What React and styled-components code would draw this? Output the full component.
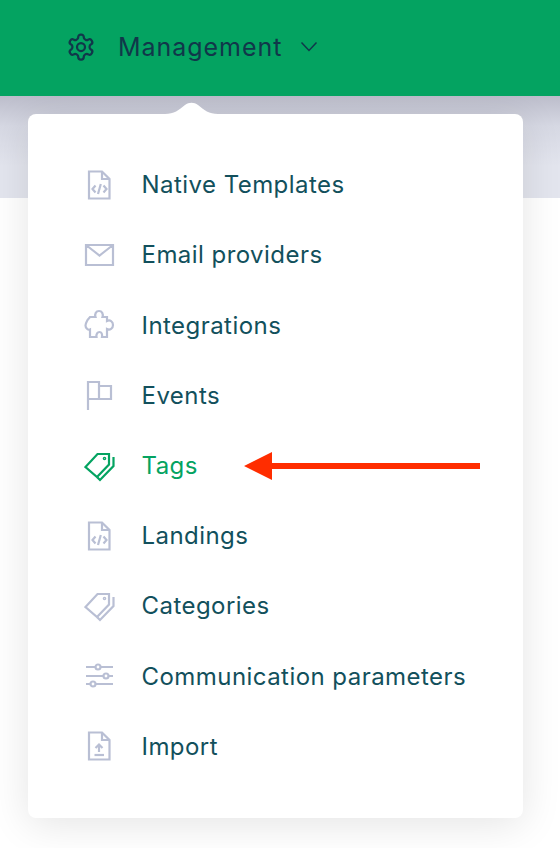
import React from 'react';
import styled, { createGlobalStyle } from 'styled-components';

const GlobalStyle = createGlobalStyle`
  html, body {
    margin: 0;
    padding: 0;
    background: #fff;
  }
  body {
    font-family: "Inter", "Noto Sans", sans-serif;
  }
`;

const Page = styled.div`
  position: relative;
  width: 560px;
  height: 848px;
  overflow: hidden;
  background: #fff;
`;

const TopBar = styled.header`
  position: relative;
  z-index: 5;
  height: 96px;
  box-sizing: border-box;
  padding: 0 0 3px 66px;
  display: flex;
  align-items: center;
  background: #04a361;
  color: #11374a;
`;

const TopLabel = styled.span`
  margin-left: 22px;
  margin-right: 18px;
  font-size: 25px;
  letter-spacing: 0.95px;
`;

const SubBar = styled.div`
  height: 102px;
  background: linear-gradient(#bcbdcb 0, #d6d8e3 30px, #e3e5ee 70px);
`;

const Menu = styled.nav`
  position: absolute;
  z-index: 4;
  left: 28px;
  top: 114px;
  width: 495px;
  height: 704px;
  box-sizing: border-box;
  padding-top: 35.7px;
  background: #fff;
  border-radius: 8px;
  box-shadow: 0 6px 40px rgba(0, 0, 0, 0.11);

  &::before {
    content: '';
    position: absolute;
    left: 137px;
    top: -15px;
    width: 53px;
    height: 15px;
    background: #fff;
    clip-path: path('M0 15 C9 15 14 11 20 6 C24 3 29 3 33 6 C39 11 44 15 53 15 Z');
  }
`;

const Row = styled.a`
  height: 70.2px;
  display: flex;
  align-items: center;
  font-size: 24px;
  letter-spacing: 0.45px;
  color: ${({ $active }) => ($active ? '#04a361' : '#12505c')};
`;

const IconSlot = styled.span`
  width: 113.5px;
  padding-left: 56px;
  box-sizing: border-box;
  display: flex;
  color: ${({ $active }) => ($active ? '#04a361' : '#b9bfd4')};
`;

const Arrow = styled.svg`
  position: absolute;
  z-index: 6;
  left: 244px;
  top: 451px;
`;

const Chevron = () => (
  <svg width="18" height="12" viewBox="0 0 18 12" fill="none" stroke="currentColor" strokeWidth="1.5">
    <path d="M1.5 1.5 L9 9.5 L16.5 1.5" />
  </svg>
);

const Gear = () => (
  <svg width="30" height="30" viewBox="0 0 24 24" fill="none" stroke="currentColor" strokeWidth="1.8" strokeLinejoin="round">
    <path d="M12.22 2h-.44a2 2 0 0 0-2 2v.18a2 2 0 0 1-1 1.73l-.43.25a2 2 0 0 1-2 0l-.15-.08a2 2 0 0 0-2.73.73l-.22.38a2 2 0 0 0 .73 2.73l.15.1a2 2 0 0 1 1 1.72v.51a2 2 0 0 1-1 1.74l-.15.09a2 2 0 0 0-.73 2.73l.22.38a2 2 0 0 0 2.73.73l.15-.08a2 2 0 0 1 2 0l.43.25a2 2 0 0 1 1 1.73V20a2 2 0 0 0 2 2h.44a2 2 0 0 0 2-2v-.18a2 2 0 0 1 1-1.73l.43-.25a2 2 0 0 1 2 0l.15.08a2 2 0 0 0 2.73-.73l.22-.39a2 2 0 0 0-.73-2.73l-.15-.08a2 2 0 0 1-1-1.74v-.5a2 2 0 0 1 1-1.74l.15-.09a2 2 0 0 0 .73-2.73l-.22-.38a2 2 0 0 0-2.73-.73l-.15.08a2 2 0 0 1-2 0l-.43-.25a2 2 0 0 1-1-1.73V4a2 2 0 0 0-2-2z" />
    <circle cx="12" cy="12" r="3.2" />
  </svg>
);

const Glyph = ({ children }) => (
  <svg width="32" height="32" viewBox="0 0 32 32" fill="none" stroke="currentColor" strokeWidth="2.2">
    {children}
  </svg>
);

const FileBase = 'M5 2.500 H18 L25.500 10 V29.500 H5 Z M18 2.500 V10 H25.500';

const CodeFile = () => (
  <Glyph>
    <path d={FileBase} />
    <path d="M11.500 16.500 L8.500 20 L11.500 23.500 M19.500 16.500 L22.500 20 L19.500 23.500 M16.800 15 L14 25" />
  </Glyph>
);

const Mail = () => (
  <Glyph>
    <path d="M2 6 H29 V26 H2 Z M2 6 L15.500 16.500 L29 6" />
  </Glyph>
);

const Puzzle = () => (
  <Glyph>
    <path d="M11.500 8 C10.500 5 12 2 15 2 C18 2 19.500 5 18.500 8 H23 V12 C26 10.500 29 12.500 29 16 C29 19.500 26 21.500 23 20 V28 H18 C18.500 25 17.500 23 15.500 23 C13.500 23 12 25 12.500 28 H6 V20.500 C4 21.500 1.500 19 1.500 16.500 C1.500 14 3 12.500 3.500 11 L6 8 Z" />
  </Glyph>
);

const Flag = () => (
  <Glyph>
    <path d="M4 31 V3 H15 V20 H4 M15 7 H27 V20 H15" />
  </Glyph>
);

const Tag = () => (
  <Glyph>
    <path d="M1.500 17 L13.500 4 H25 V14.500 L13 27 Z" />
    <circle cx="20.500" cy="8.500" r="0.7" />
    <path d="M29.500 7 V16 L16 30 L13.500 27.500" />
  </Glyph>
);

const Sliders = () => (
  <Glyph>
    <path d="M2 7 H11.500 M16.500 7 H29 M2 16 H19.500 M24.500 16 H29 M2 24 H6.500 M11.500 24 H29" />
    <circle cx="14" cy="7" r="2.500" />
    <circle cx="22" cy="16" r="2.500" />
    <circle cx="9" cy="24" r="2.500" />
  </Glyph>
);

const ImportFile = () => (
  <Glyph>
    <path d={FileBase} />
    <path d="M15 22 V14.500 M11.500 18 L15 14.500 L18.500 18" />
    <path d="M10.500 25 H20" />
  </Glyph>
);

const items = [
  { label: 'Native Templates', icon: <CodeFile /> },
  { label: 'Email providers', icon: <Mail /> },
  { label: 'Integrations', icon: <Puzzle /> },
  { label: 'Events', icon: <Flag /> },
  { label: 'Tags', icon: <Tag />, active: true },
  { label: 'Landings', icon: <CodeFile /> },
  { label: 'Categories', icon: <Tag /> },
  { label: 'Communication parameters', icon: <Sliders /> },
  { label: 'Import', icon: <ImportFile /> },
];

const App = () => (
  <>
    <GlobalStyle />
    <Page>
      <TopBar>
        <Gear />
        <TopLabel>Management</TopLabel>
        <Chevron />
      </TopBar>
      <SubBar />
      <Menu>
        {items.map((item) => (
          <Row key={item.label} $active={item.active}>
            <IconSlot $active={item.active}>{item.icon}</IconSlot>
            {item.label}
          </Row>
        ))}
      </Menu>
      <Arrow width="238" height="30" viewBox="0 0 238 30">
        <path d="M0 15 L28 1 V12 H236 V18 H28 V29 Z" fill="#ff2d00" />
      </Arrow>
    </Page>
  </>
);

export default App;
